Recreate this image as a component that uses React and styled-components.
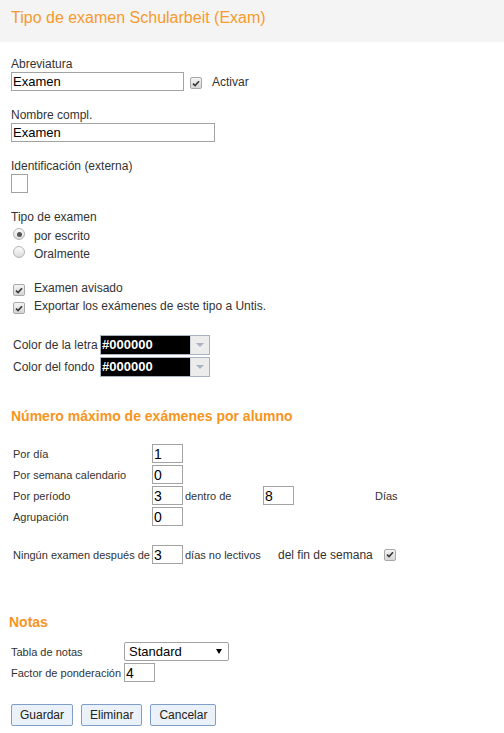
import React from "react"
import styled, { createGlobalStyle } from "styled-components"

const GlobalStyle = createGlobalStyle`
    body {
        margin: 0;
        background: #fff;
        font-family: "Liberation Sans", Arial, sans-serif;
        color: #333;
    }
`

const Header = styled.div`
    height: 42px;
    box-sizing: border-box;
    padding: 9px 11px 0;
    background: #f4f4f4;
    font-size: 16px;
    line-height: 18px;
    color: #f89a2c;
`
const Content = styled.div`
    padding: 15px 11px 0;
`
const Field = styled.div`
    margin-bottom: ${({ $mb }) => ($mb ?? 17)}px;
`
const Label = styled.div`
    font-size: 12px;
    line-height: 15px;
    margin-bottom: ${({ $mb }) => $mb || 0}px;
`
const Row = styled.div`
    display: flex;
    align-items: center;
`
const TextInput = styled.input`
    display: block;
    box-sizing: border-box;
    width: ${({ $w }) => $w}px;
    height: 19px;
    margin: 0;
    padding: 0 1px;
    border: 1px solid #a3a3a3;
    border-radius: 0;
    font: 13px "Liberation Sans", Arial, sans-serif;
    color: #000;
    background: #fff;
    outline: none;
`
const NumInput = styled(TextInput)`
    width: 31px;
    font-size: 14px;
`
const Check = styled.span`
    display: inline-flex;
    align-items: center;
    justify-content: center;
    flex: none;
    width: 12px;
    height: 12px;
    box-sizing: border-box;
    margin-top: ${({ $dy }) => $dy || 0}px;
    margin-left: ${({ $ml }) => $ml || 0}px;
    border: 1px solid #a8a8a8;
    border-radius: 2px;
    background: linear-gradient(#f4f4f4, #d6d6d6);
`
const Radio = styled.span`
    position: relative;
    flex: none;
    align-self: flex-start;
    width: 12px;
    height: 12px;
    box-sizing: border-box;
    margin: 1px 0 0 2px;
    border: 1px solid #b4b4b4;
    border-radius: 50%;
    background: linear-gradient(#fbfbfb, #dcdcdc);
    &::after {
        content: "";
        display: ${({ $on }) => ($on ? "block" : "none")};
        position: absolute;
        left: 2.5px;
        top: 2.5px;
        width: 5px;
        height: 5px;
        border-radius: 50%;
        background: #555;
    }
`
const OptionRow = styled.div`
    display: flex;
    align-items: center;
    height: 18px;
    font-size: 12px;
`
const OptionText = styled.span`
    margin-left: ${({ $ml }) => $ml || 9}px;
    font-size: 12px;
`
const ColorTable = styled.div`
    display: grid;
    grid-template-columns: 87px auto;
    grid-auto-rows: 22px;
    align-items: center;
    padding-left: 2px;
    font-size: 12px;
`
const ColorPicker = styled.div`
    display: flex;
    width: 110px;
    height: 20px;
    box-sizing: border-box;
    border: 1px solid #aab1c0;
`
const Swatch = styled.div`
    flex: 1;
    background: #000;
    color: #fff;
    font-size: 13px;
    font-weight: bold;
    line-height: 18px;
    padding-left: 1px;
`
const DropBtn = styled.div`
    width: 18px;
    display: flex;
    align-items: center;
    justify-content: center;
    background: #ececec;
    border-left: 1px solid #d0d4dc;
    &::after {
        content: "";
        border-left: 4px solid transparent;
        border-right: 4px solid transparent;
        border-top: 4px solid #aab1c0;
    }
`
const Heading = styled.div`
    font-size: 14px;
    line-height: 16px;
    font-weight: bold;
    color: #f7941d;
    margin-left: ${({ $ml }) => $ml || 0}px;
    margin-bottom: ${({ $mb }) => $mb || 0}px;
`
const LimitRow = styled.div`
    display: grid;
    grid-template-columns: ${({ $cols }) => $cols};
    height: 21px;
    align-items: center;
    padding-left: 2px;
    font-size: 11px;
`
const Big = styled.span`
    font-size: 12px;
`
const GradeGrid = styled.div`
    display: grid;
    grid-template-columns: 113px auto;
    grid-auto-rows: 21px;
    align-items: center;
    font-size: 11px;
    margin-bottom: 21px;
`
const Select = styled.div`
    display: flex;
    align-items: center;
    justify-content: space-between;
    width: 105px;
    height: 19px;
    box-sizing: border-box;
    padding: 0 6px 0 4px;
    border: 1px solid #a3a3a3;
    border-radius: 2px;
    font-size: 13px;
    color: #000;
    &::after {
        content: "";
        border-left: 3px solid transparent;
        border-right: 3px solid transparent;
        border-top: 5px solid #000;
    }
`
const Buttons = styled.div`
    display: flex;
    gap: 8px;
`
const Button = styled.button`
    height: 22px;
    margin: 0;
    padding: 0 8px;
    border: 1px solid #7f9fc9;
    border-radius: 2px;
    background: #eaf1f8;
    font: 12px "Liberation Sans", Arial, sans-serif;
    color: #222;
`

function Tick() {
    return (
        <svg width="8" height="7" viewBox="0 0 8 7">
            <path d="M1 3.6 L3.1 5.6 L7 1.2" stroke="#3a3a3a" strokeWidth="1.7" fill="none" />
        </svg>
    )
}

export default function App() {
    return (
        <>
            <GlobalStyle />
            <Header>Tipo de examen Schularbeit (Exam)</Header>
            <Content>
                <Field>
                    <Label>Abreviatura</Label>
                    <Row>
                        <TextInput $w={173} defaultValue="Examen" />
                        <Check $ml={6} $dy={3}><Tick /></Check>
                        <OptionText $ml={10}>Activar</OptionText>
                    </Row>
                </Field>
                <Field>
                    <Label>Nombre compl.</Label>
                    <TextInput $w={204} defaultValue="Examen" />
                </Field>
                <Field>
                    <Label>Identificación (externa)</Label>
                    <TextInput $w={17} defaultValue="" />
                </Field>
                <Field $mb={16}>
                    <Label $mb={2}>Tipo de examen</Label>
                    <OptionRow>
                        <Radio $on />
                        <OptionText>por escrito</OptionText>
                    </OptionRow>
                    <OptionRow>
                        <Radio />
                        <OptionText>Oralmente</OptionText>
                    </OptionRow>
                </Field>
                <Field $mb={19}>
                    <OptionRow>
                        <Check $ml={2} $dy={4}><Tick /></Check>
                        <OptionText>Examen avisado</OptionText>
                    </OptionRow>
                    <OptionRow>
                        <Check $ml={2} $dy={4}><Tick /></Check>
                        <OptionText>Exportar los exámenes de este tipo a Untis.</OptionText>
                    </OptionRow>
                </Field>
                <Field $mb={30}>
                    <ColorTable>
                        <span>Color de la letra</span>
                        <ColorPicker>
                            <Swatch>#000000</Swatch>
                            <DropBtn />
                        </ColorPicker>
                        <span>Color del fondo</span>
                        <ColorPicker>
                            <Swatch>#000000</Swatch>
                            <DropBtn />
                        </ColorPicker>
                    </ColorTable>
                </Field>

                <Heading $mb={19}>Número máximo de exámenes por alumno</Heading>
                <Field>
                    <LimitRow $cols="139px 33px 78px 112px auto">
                        <span>Por día</span>
                        <NumInput defaultValue="1" />
                    </LimitRow>
                    <LimitRow $cols="139px 33px 78px 112px auto">
                        <span>Por semana calendario</span>
                        <NumInput defaultValue="0" />
                    </LimitRow>
                    <LimitRow $cols="139px 33px 78px 112px auto">
                        <span>Por período</span>
                        <NumInput defaultValue="3" />
                        <span>dentro de</span>
                        <NumInput defaultValue="8" />
                        <span>Días</span>
                    </LimitRow>
                    <LimitRow $cols="139px 33px 78px 112px auto">
                        <span>Agrupación</span>
                        <NumInput defaultValue="0" />
                    </LimitRow>
                </Field>
                <Field $mb={49}>
                    <LimitRow $cols="139px 33px 93px 106px auto">
                        <span>Ningún examen después de</span>
                        <NumInput defaultValue="3" />
                        <span>días no lectivos</span>
                        <Big>del fin de semana</Big>
                        <Check><Tick /></Check>
                    </LimitRow>
                </Field>

                <Heading $ml={-2} $mb={11}>Notas</Heading>
                <GradeGrid>
                    <span>Tabla de notas</span>
                    <Select>Standard</Select>
                    <span>Factor de ponderación</span>
                    <NumInput defaultValue="4" />
                </GradeGrid>
                <Buttons>
                    <Button>Guardar</Button>
                    <Button>Eliminar</Button>
                    <Button>Cancelar</Button>
                </Buttons>
            </Content>
        </>
    )
}
